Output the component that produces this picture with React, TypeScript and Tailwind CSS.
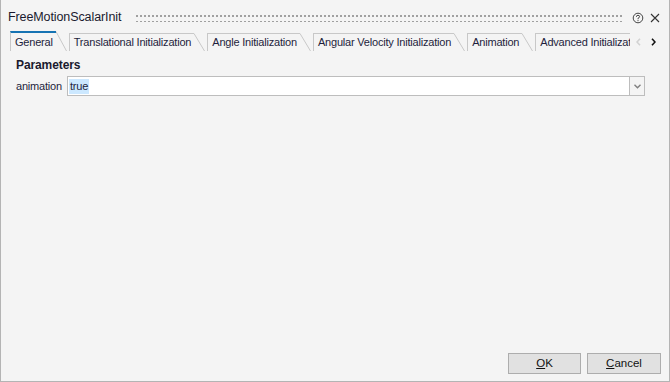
import React from "react";

const tabs = [
  "General",
  "Translational Initialization",
  "Angle Initialization",
  "Angular Velocity Initialization",
  "Animation",
  "Advanced Initialization",
];

const Slant = ({ h }: { h: number }) => (
  <svg width="11" height={h} viewBox={`0 0 11 ${h}`} className="shrink-0">
    <line x1="0" y1="0.5" x2="10.5" y2={h} stroke="#c8c8c8" strokeWidth="1" />
  </svg>
);

const Tab = ({ label, active }: { label: string; active?: boolean }) => (
  <div className="mr-[2px] flex items-end">
    <div
      className={
        active
          ? "flex h-[20px] items-center border-l border-[#c8c8c8] border-t-2 border-t-[#1673b3] pl-[4px] pr-[3px]"
          : "flex h-[18px] items-center border-l border-t border-[#c8c8c8] pl-[4px] pr-[3px]"
      }
    >
      <span className="whitespace-nowrap text-[11px] tracking-[-0.2px] text-[#1e1e3c]">{label}</span>
    </div>
    <Slant h={active ? 20 : 18} />
  </div>
);

const App = () => {
  return (
    <div
      className="flex h-[382px] w-[670px] flex-col border border-t-0 border-[#b4b4b4] bg-[#f4f4f4]"
      style={{ fontFamily: '"Liberation Sans", Arial, sans-serif' }}
    >
      <header className="flex h-[31px] items-center pl-[7px] pr-[9px] pt-[4px]">
        <h1 className="text-[12.5px] tracking-[-0.1px] text-[#1a1a2e]">FreeMotionScalarInit</h1>
        <div
          className="ml-[14px] mr-[9px] h-[9px] flex-1"
          style={{
            backgroundImage: "radial-gradient(circle, #a0a0a0 0.9px, transparent 1.1px)",
            backgroundSize: "4px 6px",
            backgroundPosition: "0 0",
          }}
        />
        <svg width="12" height="12" viewBox="0 0 12 12" className="mr-[6px]">
          <circle cx="6" cy="6" r="4.8" fill="none" stroke="#444" strokeWidth="1" />
          <path d="M4.4 4.8 Q4.4 3.3 6 3.3 Q7.6 3.3 7.6 4.7 Q7.6 5.6 6 6.3 L6 7.2" fill="none" stroke="#444" strokeWidth="1" />
          <circle cx="6" cy="8.6" r="0.6" fill="#444" />
        </svg>
        <svg width="10" height="10" viewBox="0 0 10 10">
          <path d="M1 1 L9 9 M9 1 L1 9" stroke="#333" strokeWidth="1.1" />
        </svg>
      </header>

      <div className="flex h-[20px] items-end pl-[9px]">
        <div className="flex flex-1 items-end overflow-hidden">
          {tabs.map((t, i) => (
            <Tab key={t} label={t} active={i === 0} />
          ))}
        </div>
        <div className="flex h-[18px] w-[39px] items-center gap-[10px] pl-[6px]">
          <svg width="5" height="8" viewBox="0 0 5 8">
            <path d="M4 0.8 L1 4 L4 7.2" fill="none" stroke="#d2d2d2" strokeWidth="1.6" />
          </svg>
          <svg width="5" height="8" viewBox="0 0 5 8">
            <path d="M1 0.8 L4 4 L1 7.2" fill="none" stroke="#111" strokeWidth="1.6" />
          </svg>
        </div>
      </div>

      <main className="flex flex-1 flex-col px-[15px] pt-[7px]">
        <h2 className="text-[12px] font-bold leading-[15px] tracking-[-0.1px] text-[#1a1a2e]">Parameters</h2>
        <div className="mt-[3px] flex items-center">
          <label className="w-[51px] text-[11px] tracking-[-0.2px] text-[#1e1e3c]">animation</label>
          <div className="flex h-[20px] w-[578px] border border-[#bdbdbd] bg-white">
            <div className="flex flex-1 items-center pl-[1px]">
              <span className="bg-[#cce8ff] px-[1px] text-[11px] leading-[15px] tracking-[-0.2px] text-[#1e1e3c]">true</span>
            </div>
            <div className="flex w-[15px] items-center justify-center border-l border-[#bdbdbd] bg-[#f4f4f4]">
              <svg width="7" height="5" viewBox="0 0 7 5">
                <path d="M0.5 0.8 L3.5 3.8 L6.5 0.8" fill="none" stroke="#808080" strokeWidth="1.4" />
              </svg>
            </div>
          </div>
        </div>
      </main>

      <footer className="flex justify-end gap-[6px] pb-[7px] pr-[8px]">
        <button className="h-[21px] w-[73px] border border-[#adadad] bg-[#e1e1e1] text-[11.5px] text-[#111]">
          <span className="underline">O</span>K
        </button>
        <button className="h-[21px] w-[74px] border border-[#adadad] bg-[#e1e1e1] text-[11.5px] text-[#111]">
          <span className="underline">C</span>ancel
        </button>
      </footer>
    </div>
  );
};

export default App;
